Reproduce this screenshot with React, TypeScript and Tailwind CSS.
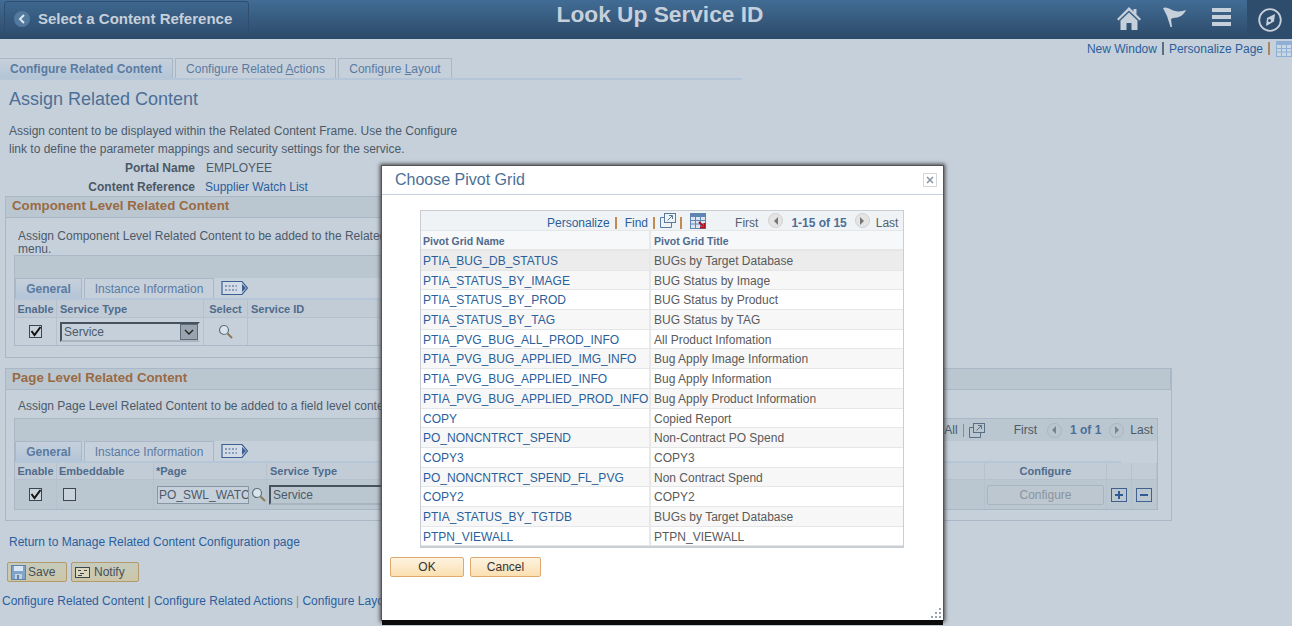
import React from 'react';

const rows = [
  ['PTIA_BUG_DB_STATUS', 'BUGs by Target Database'],
  ['PTIA_STATUS_BY_IMAGE', 'BUG Status by Image'],
  ['PTIA_STATUS_BY_PROD', 'BUG Status by Product'],
  ['PTIA_STATUS_BY_TAG', 'BUG Status by TAG'],
  ['PTIA_PVG_BUG_ALL_PROD_INFO', 'All Product Infomation'],
  ['PTIA_PVG_BUG_APPLIED_IMG_INFO', 'Bug Apply Image Information'],
  ['PTIA_PVG_BUG_APPLIED_INFO', 'Bug Apply Information'],
  ['PTIA_PVG_BUG_APPLIED_PROD_INFO', 'Bug Apply Product Information'],
  ['COPY', 'Copied Report'],
  ['PO_NONCNTRCT_SPEND', 'Non-Contract PO Spend'],
  ['COPY3', 'COPY3'],
  ['PO_NONCNTRCT_SPEND_FL_PVG', 'Non Contract Spend'],
  ['COPY2', 'COPY2'],
  ['PTIA_STATUS_BY_TGTDB', 'BUGs by Target Database'],
  ['PTPN_VIEWALL', 'PTPN_VIEWALL'],
];

function NewWindowIcon({ color }: { color: string }) {
  return (
    <svg width="16" height="15" viewBox="0 0 16 15" fill="none" stroke={color} strokeWidth="1">
      <rect x="4.5" y="0.5" width="11" height="9" fill="none" />
      <path d="M4.5 4.5H0.5V14.5H11.5V9.5" />
      <path d="M7.5 7.5L12 3M9 2.5H12.5V6" />
    </svg>
  );
}

function GridIcon({ download, dim }: { download?: boolean; dim?: boolean }) {
  const line = dim ? '#8fb0d2' : '#5f86b3';
  return (
    <svg width="16" height="16" viewBox="0 0 16 16">
      <rect x="0.5" y="0.5" width="15" height="15" fill={dim ? '#c9d8e6' : '#dbe6f2'} stroke={line} />
      <rect x="1" y="1" width="14" height="3" fill={line} />
      <path d="M5.5 4V15M10.5 4V15M1 7.5H15M1 11H15" stroke={line} />
      {download && <path d="M9 9L13 13M14.5 10V14.5H10" stroke="#b3101a" strokeWidth="2" fill="none" />}
    </svg>
  );
}

function PageArrow({ right, dim }: { right?: boolean; dim?: boolean }) {
  return (
    <span className={`w-[15px] h-[15px] rounded-full flex items-center justify-center border ${dim ? 'bg-[#b9c5cf] border-[#aab5bf]' : 'bg-[#e4e4e4] border-[#d0d0d0]'}`}>
      <svg width="6" height="8" viewBox="0 0 6 8">
        <path d={right ? 'M1 0L5 4L1 8Z' : 'M5 0L1 4L5 8Z'} fill={dim ? '#75838f' : '#777'} />
      </svg>
    </span>
  );
}

function ShowAllTabs() {
  return (
    <svg width="28" height="16" viewBox="0 0 28 16" fill="none">
      <path d="M1 1.5H21L26.5 8L21 14.5H1Z" fill="#d3dce6" stroke="#3f5f92" strokeWidth="1.2" />
      <path d="M4 6H16M4 10H16" stroke="#3f5f92" strokeDasharray="2 1.5" />
      <path d="M21 4L25 8L21 12Z" fill="#3f5f92" />
    </svg>
  );
}

function Magnifier() {
  return (
    <svg width="15" height="15" viewBox="0 0 15 15" fill="none">
      <circle cx="6" cy="6" r="4.5" fill="#d9e3ea" stroke="#5e7082" strokeWidth="1.2" />
      <path d="M9.5 9.5L14 14" stroke="#8a7a55" strokeWidth="2" />
    </svg>
  );
}

function Check({ on }: { on?: boolean }) {
  return (
    <span className="w-[13px] h-[13px] border border-[#3b4650] bg-[#c9d3dc] flex items-center justify-center">
      {on && (
        <svg width="13" height="13" viewBox="0 0 13 13" fill="none" className="shrink-0">
          <path d="M2.5 6L5.5 10L11.5 2" stroke="#111" strokeWidth="2" />
        </svg>
      )}
    </span>
  );
}

function GridTabs() {
  return (
    <div className="h-[20px] flex w-full">
      <div className="w-[67px] h-[20px] border border-b-0 border-[#a9b7c6] bg-gradient-to-b from-[#c6d0db] to-[#b3c5d8] text-[12px] font-bold text-[#5a7ba1] flex items-center justify-center">General</div>
      <div className="w-[130px] ml-[2px] h-[20px] border border-b-0 border-[#a9b7c6] text-[12px] text-[#5a7ba1] flex items-center justify-center">Instance Information</div>
      <div className="ml-[7px] mt-[2px]"><ShowAllTabs /></div>
    </div>
  );
}

function Th({ className, children }: { className: string; children?: React.ReactNode }) {
  return <div className={`shrink-0 h-full pt-px flex items-center border-r border-[#b5c1cd] text-[11px] font-bold text-[#4f6b8c] ${className}`}>{children}</div>;
}

function Td({ className, children }: { className: string; children?: React.ReactNode }) {
  return <div className={`shrink-0 h-full flex items-center border-r border-[#b5c1cd] ${className}`}>{children}</div>;
}

export default function App() {
  return (
    <div className="relative w-[1292px] h-[626px] overflow-hidden bg-[#c6d0db] text-[12px] text-[#4c5a68] font-['Liberation_Sans',Arial,sans-serif]">
      {/* top bar */}
      <div className="h-[39px] flex bg-gradient-to-b from-[#426c95] to-[#2c4a69]">
        <div className="w-[245px] h-[34px] ml-[4px] mt-px pt-[2px] border border-[#2f4e6e] rounded-[3px] flex items-center bg-gradient-to-b from-[#3e678f] to-[#2f4f70]">
          <span className="ml-[9px] w-[16px] h-[16px] rounded-full bg-[#52799e] flex items-center justify-center">
            <svg width="8" height="10" viewBox="0 0 8 10" fill="none"><path d="M6 1L2 5L6 9" stroke="#dfe6ec" strokeWidth="2" /></svg>
          </span>
          <span className="ml-[8px] text-[15px] font-bold text-[#c6d0db]">Select a Content Reference</span>
        </div>
        <div className="w-[822px] text-center text-[22.7px] leading-[29px] font-bold text-[#c6d0db]">Look Up Service ID</div>
        <div className="ml-[46px] mt-[7px]">
          <svg width="24" height="23" viewBox="0 0 24 23" fill="#c6d0db">
            <path d="M12 0L0 12L1.5 13.5L12 3.5L22.5 13.5L24 12L19.5 7.5V2H16.5V4.5Z" />
            <path d="M12 5.5L3.5 13.5V23H9.5V16H14.5V23H20.5V13.5Z" />
          </svg>
        </div>
        <div className="ml-[22px] mt-[6px]">
          <svg width="23" height="22" viewBox="0 0 23 22" fill="#c6d0db">
            <path d="M0 2C4 0 8 4 12 5C16 6 20 5 23 4C21 9 16 12 10 12L8 13L9 21H7.5L4 10Z" />
          </svg>
        </div>
        <div className="ml-[26px] mt-[8px] w-[19px] flex flex-col gap-[3px]">
          <div className="h-[4px] bg-[#c6d0db]" />
          <div className="h-[4px] bg-[#c6d0db]" />
          <div className="h-[4px] bg-[#c6d0db]" />
        </div>
        <div className="ml-[16px] w-[45px] h-[39px] bg-[#2e4c6b] flex items-center justify-center">
          <svg width="24" height="24" viewBox="0 0 24 24" fill="none">
            <circle cx="12" cy="12" r="10.8" stroke="#c6d0db" strokeWidth="1.8" />
            <path d="M17 6L16 13.5L8 18L9 10Z" fill="#c6d0db" />
            <circle cx="11.5" cy="12.5" r="1.5" fill="#2e4c6b" />
          </svg>
        </div>
      </div>

      {/* page links */}
      <div className="h-[19px] flex items-center justify-end text-[#2a5f9b]">
        <span>New Window</span>
        <span className="mx-[5px] w-[2px] h-[13px] bg-[#5a6f85]" />
        <span>Personalize Page</span>
        <span className="mx-[5px] w-[2px] h-[13px] bg-[#a8875f]" />
        <span className="ml-px"><GridIcon dim /></span>
      </div>

      {/* tabs */}
      <div className="h-[22px] w-[742px] flex border-b-2 border-[#b5c6d9]">
        <div className="w-[173px] h-[20px] border-r border-t border-[#a9b7c6] bg-gradient-to-b from-[#c6d0db] to-[#b3c5d8] font-bold text-[#5a7ba1] flex items-center justify-center">Configure Related Content</div>
        <div className="w-[161px] ml-[2px] h-[20px] border border-b-0 border-[#a9b7c6] text-[#5a7ba1] flex items-center justify-center"><span>Configure Related <u>A</u>ctions</span></div>
        <div className="w-[114px] ml-[2px] h-[20px] border border-b-0 border-[#a9b7c6] text-[#5a7ba1] flex items-center justify-center"><span>Configure <u>L</u>ayout</span></div>
      </div>

      <div className="pl-[9px] pt-[8px] text-[18px] leading-[22px] text-[#4c6f97]">Assign Related Content</div>
      <div className="pl-[9px] pt-[12px] leading-[18px] w-[470px]">
        Assign content to be displayed within the Related Content Frame. Use the Configure link to define the parameter mappings and security settings for the service.
      </div>
      <div className="flex h-[19px] items-center">
        <span className="w-[195px] text-right font-bold text-[#4a5866]">Portal Name</span>
        <span className="ml-[11px]">EMPLOYEE</span>
      </div>
      <div className="flex h-[19px] items-center">
        <span className="w-[195px] text-right font-bold text-[#4a5866]">Content Reference</span>
        <span className="ml-[10px] text-[#2a5f9b]">Supplier Watch List</span>
      </div>

      {/* component level */}
      <div className="ml-[5px] w-[920px] h-[162px] border border-[#a9b7c6]">
        <div className="h-[21px] bg-[#bac7d1] border-b border-[#a9b7c6] pl-[6px] text-[13.3px] leading-[18px] font-bold text-[#9a6a44]">Component Level Related Content</div>
        <div className="pl-[12px] pt-[12px] leading-[13px] whitespace-nowrap">
          Assign Component Level Related Content to be added to the Related Actions<br />menu.
        </div>
        <div className="ml-[8px] -mt-px w-[900px] h-[91px] border border-[#a9b7c6]">
          <div className="h-[22px] bg-[#bac7d1]" />
          <GridTabs />
          <div className="h-[2px] bg-[#b5c6d9]" />
          <div className="h-[18px] flex bg-[#c2ccd6] border-b border-[#b5c1cd]">
            <Th className="w-[42px] justify-center">Enable</Th>
            <Th className="w-[147px] pl-[3px]">Service Type</Th>
            <Th className="w-[44px] justify-center">Select</Th>
            <Th className="w-[130px] pl-[3px]">Service ID</Th>
          </div>
          <div className="h-[27px] flex bg-[#c6d0db]">
            <Td className="w-[42px] justify-center"><Check on /></Td>
            <Td className="w-[147px] pl-[3px]">
              <div className="w-[140px] h-[20px] border-2 border-[#46525e] border-r-[#c6d0db] border-b-[#aab4be] flex items-center justify-between pl-[2px] text-[#4c5a68]">
                Service
                <span className="w-[18px] h-[16px] bg-[#98a5b0] border border-[#5d6b78] flex items-center justify-center">
                  <svg width="10" height="6" viewBox="0 0 10 6" fill="none"><path d="M1 1L5 5L9 1" stroke="#222" strokeWidth="1.4" /></svg>
                </span>
              </div>
            </Td>
            <Td className="w-[44px] justify-center"><Magnifier /></Td>
            <Td className="w-[130px]" />
          </div>
        </div>
      </div>

      {/* page level */}
      <div className="ml-[5px] mt-[10px] w-[1167px] h-[153px] border border-[#a9b7c6] border-r-0">
        <div className="h-[21px] bg-[#bac7d1] border-b border-[#a9b7c6] border-r-2 pl-[6px] text-[13.3px] leading-[18px] font-bold text-[#9a6a44]">Page Level Related Content</div>
        <div className="h-[131px] border-r border-[#a9b7c6]">
          <div className="pl-[12px] pt-[10px] leading-[13px] whitespace-nowrap">Assign Page Level Related Content to be added to a field level context menu.</div>
          <div className="ml-[8px] mt-[5px] w-[1144px] h-[92px] border border-[#a9b7c6]">
            <div className="h-[22px] bg-[#bac7d1] flex items-center justify-end pr-[4px]">
              <span>All</span>
              <span className="mx-[5px] w-px h-[13px] bg-[#a8875f]" />
              <NewWindowIcon color="#5a6f85" />
              <span className="ml-[29px]">First</span>
              <span className="ml-[10px]"><PageArrow dim /></span>
              <span className="ml-[8px] font-bold text-[#4c6f97]">1 of 1</span>
              <span className="ml-[8px]"><PageArrow right dim /></span>
              <span className="ml-[6px]">Last</span>
            </div>
            <GridTabs />
            <div className="h-[2px] w-[1106px] bg-[#b5c6d9]" />
            <div className="h-[17px] flex bg-[#c2ccd6] border-b border-[#b5c1cd]">
              <Th className="w-[42px] justify-center">Enable</Th>
              <Th className="w-[97px] pl-[2px]">Embeddable</Th>
              <Th className="w-[113px] pl-[2px]">*Page</Th>
              <Th className="w-[718px] pl-[3px]">Service Type</Th>
              <Th className="w-[122px] justify-center">Configure</Th>
              <Th className="w-[25px]" />
              <Th className="w-[25px]" />
            </div>
            <div className="h-[29px] flex bg-[#bac7d1]">
              <Td className="w-[42px] justify-center"><Check on /></Td>
              <Td className="w-[97px] pl-[6px]"><Check /></Td>
              <Td className="w-[113px] pl-[3px]">
                <div className="w-[92px] h-[18px] border border-[#8796a5] bg-[#c6d0db] overflow-hidden whitespace-nowrap pl-[1px] leading-[16px] shrink-0">PO_SWL_WATCH</div>
                <span className="ml-[2px]"><Magnifier /></span>
              </Td>
              <Td className="w-[718px] pl-[2px]">
                <div className="w-[140px] h-[20px] border-2 border-[#46525e] border-r-[#c6d0db] border-b-[#aab4be] pl-[2px] leading-[16px]">Service</div>
              </Td>
              <Td className="w-[122px] justify-center">
                <div className="w-[117px] h-[20px] rounded-[2px] border border-[#a9b4bf] bg-[#bcc7d0] text-[#8a949e] flex items-center justify-center">Configure</div>
              </Td>
              <Td className="w-[25px] justify-center">
                <span className="w-[16px] h-[14px] border border-[#3f6190] flex items-center justify-center">
                  <svg width="10" height="10" viewBox="0 0 10 10"><path d="M5 1V9M1 5H9" stroke="#2f5a95" strokeWidth="2" /></svg>
                </span>
              </Td>
              <Td className="w-[25px] justify-center">
                <span className="w-[16px] h-[14px] border border-[#3f6190] flex items-center justify-center">
                  <svg width="10" height="10" viewBox="0 0 10 10"><path d="M1 5H9" stroke="#2f5a95" strokeWidth="2" /></svg>
                </span>
              </Td>
            </div>
          </div>
        </div>
      </div>

      <div className="pl-[9px] pt-[14px] leading-[14px] text-[#2a5f9b]">Return to Manage Related Content Configuration page</div>
      <div className="flex pl-[7px] pt-[13px]">
        <div className="w-[60px] h-[20px] border border-[#b39a67] rounded-[2px] bg-gradient-to-b from-[#c6cbbd] to-[#cdc6a8] flex items-center pl-[3px]">
          <svg width="15" height="15" viewBox="0 0 15 15">
            <rect x="0.5" y="0.5" width="14" height="14" fill="#7ea4cc" stroke="#5d83ad" />
            <rect x="3" y="1" width="9" height="5" fill="#dbe6f2" />
            <rect x="4" y="9" width="7" height="5" fill="#c6d0db" />
            <rect x="6" y="10" width="2" height="4" fill="#5d83ad" />
          </svg>
          <span className="ml-[2px] text-[#44505c]">Save</span>
        </div>
        <div className="ml-[4px] w-[68px] h-[20px] border border-[#b39a67] rounded-[2px] bg-gradient-to-b from-[#c6cbbd] to-[#cdc6a8] flex items-center pl-[3px]">
          <svg width="15" height="11" viewBox="0 0 15 11" fill="none" stroke="#3c4650">
            <rect x="0.5" y="0.5" width="14" height="10" fill="#dcd8bd" />
            <path d="M3 3.5H6M9 3.5H12M5 6.5H9M3 8.5H7" />
          </svg>
          <span className="ml-[4px] text-[#44505c]">Notify</span>
        </div>
      </div>
      <div className="pl-[2px] pt-[12px] leading-[14px] whitespace-nowrap text-[#2a5f9b]">
        Configure Related Content <span className="text-[#4c5a68]">|</span> Configure Related Actions <span className="text-[#a8875f]">|</span> Configure Layout
      </div>

      {/* modal */}
      <div className="absolute left-[382px] top-[166px] w-[561px] h-[454px] bg-white shadow-[0_5px_0_#0b0b0b,0_0_0_1px_#555,0_0_4px_2px_#444]">
        <div className="h-[29px] border-b border-[#c6d0db] flex items-center justify-between pl-[13px] pr-[6px]">
          <span className="text-[16px] text-[#4c6f97]">Choose Pivot Grid</span>
          <span className="w-[14px] h-[14px] border border-[#d3d8dd] flex items-center justify-center">
            <svg width="8" height="8" viewBox="0 0 8 8"><path d="M1 1L7 7M7 1L1 7" stroke="#8a97a3" strokeWidth="1.6" /></svg>
          </span>
        </div>
        <div className="ml-[38px] mt-[15px] w-[484px] border border-[#c8ced4] border-b-2">
          <div className="h-[20px] bg-[#f0f3f5] flex items-center border-b border-[#e4e6e8] pl-[126px] text-[#2a5f9b]">
            <span className="mt-[4px]">Personalize</span>
            <span className="ml-[5px] mt-[4px] w-[2px] h-[12px] bg-[#c08a50]" />
            <span className="ml-[8px] mt-[4px]">Find</span>
            <span className="ml-[5px] mt-[4px] w-[2px] h-[12px] bg-[#c08a50]" />
            <span className="ml-[5px]"><NewWindowIcon color="#5a7ba1" /></span>
            <span className="ml-[4px] mt-[4px] w-[2px] h-[12px] bg-[#c08a50]" />
            <span className="ml-[8px]"><GridIcon download /></span>
            <span className="ml-[29px] mt-[4px] text-[#55606b]">First</span>
            <span className="ml-[10px]"><PageArrow /></span>
            <span className="ml-[8px] mt-[4px] font-bold text-[#4c6f97]">1-15 of 15</span>
            <span className="ml-[8px]"><PageArrow right /></span>
            <span className="ml-[6px] mt-[4px] text-[#55606b]">Last</span>
          </div>
          <div className="h-[20px] flex bg-[#f7f8f9] border-b-2 border-[#e4e6e8] text-[10.5px] font-bold text-[#4f6b8c]">
            <div className="w-[230px] border-r-2 border-[#e8e8e8] pl-[2px] leading-[20px]">Pivot Grid Name</div>
            <div className="pl-[3px] leading-[20px]">Pivot Grid Title</div>
          </div>
          {rows.map(([name, title], i) => (
            <div
              key={name}
              className={`h-[19.7px] flex border-b border-[#e4e6e8] ${i === 0 ? 'bg-[#ececec]' : i % 2 === 1 ? 'bg-[#f7f7f7]' : 'bg-white'}`}
            >
              <div className="w-[230px] border-r-2 border-[#e8e8e8] pl-[2px] leading-[20px] text-[#2a5f9b] whitespace-nowrap">{name}</div>
              <div className="pl-[3px] leading-[20px] text-[#5a5a5a]">{title}</div>
            </div>
          ))}
        </div>
        <div className="flex pl-[8px] mt-[9px]">
          <div className="w-[74px] h-[20px] border border-[#e0a96d] rounded-[2px] bg-gradient-to-b from-[#fdf3e0] to-[#fbdfb0] flex items-center justify-center text-[#333]">OK</div>
          <div className="ml-[6px] w-[71px] h-[20px] border border-[#e0a96d] rounded-[2px] bg-gradient-to-b from-[#fdf3e0] to-[#fbdfb0] flex items-center justify-center text-[#333]">Cancel</div>
        </div>
        <svg className="absolute right-[1px] bottom-[1px]" width="11" height="11" viewBox="0 0 11 11" fill="#9aa3ab">
          <rect x="8" y="0" width="2" height="2" />
          <rect x="4" y="4" width="2" height="2" />
          <rect x="8" y="4" width="2" height="2" />
          <rect x="0" y="8" width="2" height="2" />
          <rect x="4" y="8" width="2" height="2" />
          <rect x="8" y="8" width="2" height="2" />
        </svg>
      </div>
    </div>
  );
}
